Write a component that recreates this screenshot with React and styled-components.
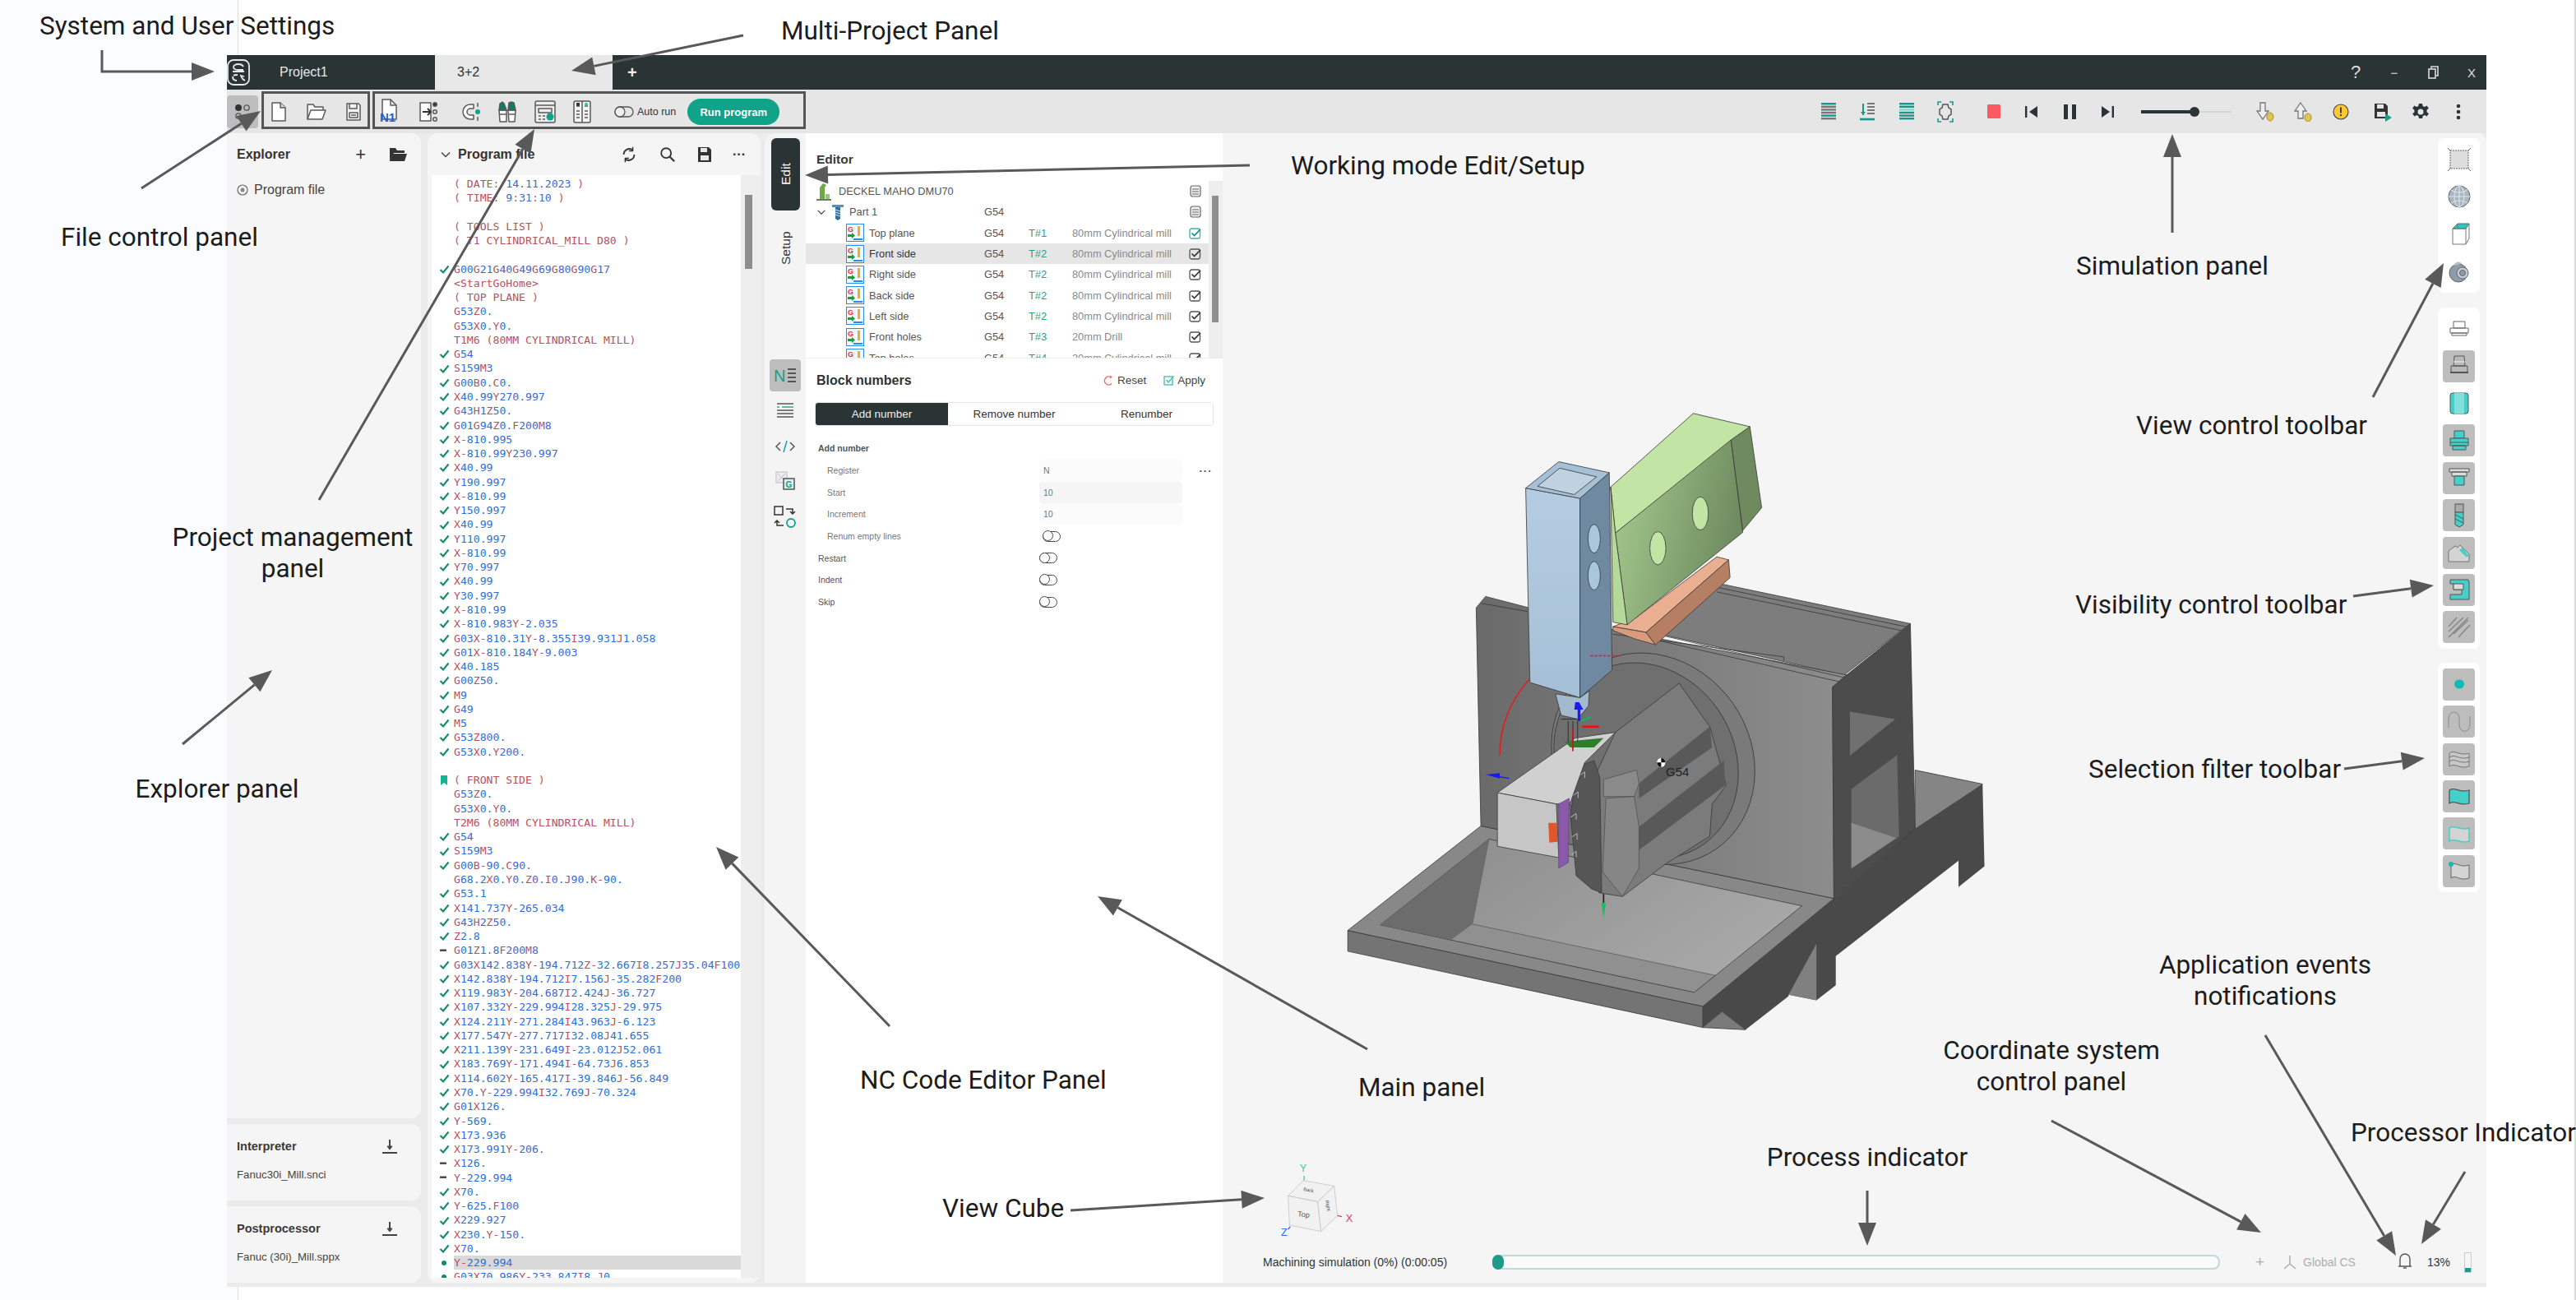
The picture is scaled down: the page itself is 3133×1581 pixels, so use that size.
import React from "react";
import styled, { createGlobalStyle } from "styled-components";

const GlobalStyle = createGlobalStyle`
    html, body {
        margin: 0;
        padding: 0;
    }
    body {
        width: 3133px;
        height: 1581px;
        overflow: hidden;
        font-family: "Liberation Sans", Arial, sans-serif;
        background: linear-gradient(to right, #fafcff 0 289px, #dcdcdc 289px 290px, #fff 290px 3131px, #dcdcdc 3131px);
    }
`;

const DARK = "#2b3435";
const TEAL = "#0fa38a";
const ICON = "#5a5a5a";

const Page = styled.div`
    position: relative;
    width: 3133px;
    height: 1581px;
    box-sizing: border-box;
    padding: 67px 109px 16px 276px;
    overflow: hidden;
`;

const Window = styled.div`
    height: 100%;
    display: flex;
    flex-direction: column;
    background: #ebebeb;
`;

/* title bar */
const TitleBar = styled.div`
    height: 42px;
    flex-shrink: 0;
    display: flex;
    align-items: center;
    background: ${DARK};
    color: #fff;
`;
const LogoBox = styled.div`
    width: 64px;
    height: 100%;
    display: flex;
    align-items: center;
`;
const Tab = styled.div`
    height: 100%;
    display: flex;
    align-items: center;
    width: ${props => props.$w}px;
    padding-left: ${props => props.$pad}px;
    box-sizing: border-box;
    font-size: 16px;
    background: ${props => (props.$active ? "#e8e8e8" : "transparent")};
    color: ${props => (props.$active ? "#333" : "#e6e6e6")};
`;
const AddTab = styled.div`
    margin-left: 18px;
    font-size: 20px;
    font-weight: 700;
    color: #eee;
`;
const WinButtons = styled.div`
    margin-left: auto;
    display: flex;
    align-items: center;
    height: 100%;
    margin-right: -5.5px;
`;
const WinButton = styled.div`
    width: 47px;
    display: flex;
    justify-content: center;
    align-items: center;
    font-size: ${props => props.$size || 16}px;
    color: #ddd;
`;

/* tool bar */
const ToolBar = styled.div`
    height: 53px;
    flex-shrink: 0;
    display: flex;
    background: #e6e6e6;
`;
const ToggleButton = styled.div`
    width: 38px;
    height: 40px;
    margin-top: 7px;
    margin-right: 4px;
    background: #bdbdbd;
    border-radius: 4px;
    display: flex;
    align-items: center;
    justify-content: center;
`;
const OutlineGroup = styled.div`
    height: 46px;
    margin-top: 2px;
    margin-right: 3px;
    width: ${props => props.$w}px;
    box-sizing: border-box;
    border: 3px solid #555;
    display: flex;
    align-items: center;
    padding-top: 4px;
`;
const ToolSlot = styled.div`
    width: ${props => props.$w || 46}px;
    flex-shrink: 0;
    display: flex;
    align-items: center;
    justify-content: center;
`;
const AutoRun = styled.div`
    display: flex;
    align-items: center;
    gap: 4px;
    margin-left: 18px;
    font-size: 12.5px;
    color: #333;
`;
const RunButton = styled.div`
    margin-left: 14px;
    width: 112px;
    height: 32px;
    border-radius: 16px;
    background: ${TEAL};
    color: #fff;
    font-size: 13px;
    font-weight: 700;
    display: flex;
    align-items: center;
    justify-content: center;
`;
const SimTools = styled.div`
    margin-left: auto;
    padding-right: 11px;
    display: flex;
    align-items: center;
    height: 100%;
`;
const SimGap = styled.div`
    width: ${props => props.$w}px;
`;
const Slider = styled.div`
    position: relative;
    width: 110px;
    height: 2px;
    margin-left: 18px;
    margin-right: 18px;
    background: #d6d6d6;
`;
const SliderFill = styled.div`
    height: 4px;
    margin-top: -1px;
    width: 65px;
    background: ${DARK};
`;
const SliderKnob = styled.div`
    position: absolute;
    left: 59px;
    top: -5px;
    width: 12px;
    height: 12px;
    border-radius: 50%;
    background: ${DARK};
`;

/* body */
const Body = styled.div`
    flex: 1;
    min-height: 0;
    display: flex;
    padding-bottom: 5px;
`;
const ExplorerColumn = styled.div`
    width: 236px;
    flex-shrink: 0;
    display: flex;
    flex-direction: column;
    gap: 7px;
    margin-right: 8px;
`;
const SidePanel = styled.div`
    background: #f5f5f5;
    border-radius: 0 12px 12px 0;
    box-sizing: border-box;
    flex: ${props => (props.$grow ? 1 : "0 0 93px")};
    padding: 0 12px;
`;
const PanelHead = styled.div`
    height: 51px;
    display: flex;
    align-items: center;
    justify-content: space-between;
    font-size: 16px;
    font-weight: 700;
    color: #333;
`;
const HeadIcons = styled.div`
    display: flex;
    align-items: center;
    gap: 28px;
    padding-right: 5px;
    font-size: 22px;
    font-weight: 400;
`;
const ExplorerItem = styled.div`
    margin-top: 9px;
    display: flex;
    align-items: center;
    gap: 7px;
    font-size: 16px;
    color: #444;
`;
const InfoHead = styled.div`
    height: 54px;
    display: flex;
    align-items: center;
    justify-content: space-between;
    font-size: 14.5px;
    font-weight: 700;
    color: #3a3a3a;
    padding-right: 16px;
`;
const InfoValue = styled.div`
    font-size: 13.2px;
    color: #444;
`;

const ProgramPanel = styled.div`
    width: 405px;
    flex-shrink: 0;
    display: flex;
    flex-direction: column;
    background: #f5f5f5;
    border-radius: 12px;
    padding: 0 0 6px 5px;
    box-sizing: border-box;
    margin-right: 5px;
`;
const ProgramHead = styled.div`
    height: 51px;
    flex-shrink: 0;
    display: flex;
    align-items: center;
    padding-left: 10px;
    font-size: 16px;
    font-weight: 700;
    color: #333;
`;
const ProgramTitle = styled.div`
    margin-left: 8px;
    flex: 1;
`;
const ProgramIcons = styled.div`
    display: flex;
    align-items: center;
    gap: 25px;
    padding-right: 18px;
`;
const CodeRow = styled.div`
    flex: 1;
    min-height: 0;
    display: flex;
`;
const CodeArea = styled.div`
    width: 376px;
    flex-shrink: 0;
    background: #fff;
    overflow: hidden;
    padding-top: 2px;
    box-sizing: border-box;
`;
const CodeLine = styled.div`
    height: 17.27px;
    line-height: 17.27px;
    display: flex;
    white-space: pre;
    font-family: "DejaVu Sans Mono", "Liberation Mono", monospace;
    font-size: 13.15px;
    color: #b5525f;
`;
const Gutter = styled.div`
    width: 27px;
    flex-shrink: 0;
    display: flex;
    align-items: center;
    justify-content: center;
    padding-left: 3px;
    box-sizing: border-box;
`;
const CodeText = styled.div`
    flex: 1;
    overflow: hidden;
    background: ${props => (props.$hl ? "#d9d9d9" : "transparent")};
`;
const Num = styled.span`
    color: #2f6ed8;
`;
const Track = styled.div`
    flex: 1;
    background: #eeeeee;
    padding: ${props => props.$top}px 0 0 ${props => props.$left}px;
`;
const Thumb = styled.div`
    width: ${props => props.$w}px;
    height: ${props => props.$h}px;
    background: #8e8e8e;
`;

/* edit column */
const ModeColumn = styled.div`
    width: 50px;
    flex-shrink: 0;
    background: #f4f4f4;
    border-radius: 12px 0 0 0;
    display: flex;
    flex-direction: column;
    align-items: center;
    padding-top: 6px;
    box-sizing: border-box;
`;
const ModeTab = styled.div`
    width: 35px;
    height: ${props => props.$h}px;
    flex-shrink: 0;
    border-radius: 6px;
    background: ${props => (props.$active ? DARK : "transparent")};
    color: ${props => (props.$active ? "#fff" : "#333")};
    writing-mode: vertical-rl;
    transform: rotate(180deg);
    display: flex;
    align-items: center;
    justify-content: center;
    font-size: 15.5px;
`;
const ModeIcons = styled.div`
    margin-top: ${props => props.$top}px;
    display: flex;
    flex-direction: column;
    align-items: center;
`;
const ModeIcon = styled.div`
    width: 38px;
    height: ${props => props.$h}px;
    border-radius: 4px;
    background: ${props => (props.$on ? "#bdbdbd" : "transparent")};
    display: flex;
    align-items: center;
    justify-content: center;
`;

const EditorColumn = styled.div`
    width: 507px;
    flex-shrink: 0;
    display: flex;
    flex-direction: column;
    background: #fff;
`;
const EditorHead = styled.div`
    height: 52px;
    flex-shrink: 0;
    margin-top: 6px;
    padding-left: 13px;
    display: flex;
    align-items: center;
    font-size: 15.5px;
    font-weight: 700;
    color: #3a3a3a;
`;
const TreeWrap = styled.div`
    height: 216px;
    flex-shrink: 0;
    display: flex;
    overflow: hidden;
    border-bottom: 1px solid #ececec;
    box-sizing: border-box;
`;
const TreeList = styled.div`
    width: 490px;
    flex-shrink: 0;
`;
const TreeRow = styled.div`
    height: 25.3px;
    display: grid;
    grid-template-columns: 217px 54px 53px 133px 1fr;
    align-items: center;
    font-size: 12.8px;
    color: #555;
    background: ${props => (props.$hl ? "#e6e6e6" : "transparent")};
    white-space: nowrap;
`;
const NameCell = styled.div`
    display: flex;
    align-items: center;
    padding-left: ${props => props.$pad}px;
    gap: ${props => props.$gap}px;
    color: ${props => (props.$hl ? "#333" : "#555")};
`;
const ToolCell = styled.div`
    color: #2a9d8f;
`;
const DescCell = styled.div`
    color: #8a8a8a;
`;
const CheckCell = styled.div`
    display: flex;
    justify-content: center;
`;

const BlockPanel = styled.div`
    flex: 1;
    padding: 0 11px 0 11px;
`;
const BlockHead = styled.div`
    height: 53px;
    display: flex;
    align-items: center;
    padding-left: 2px;
    padding-right: 10px;
    font-size: 16px;
    font-weight: 700;
    color: #333;
`;
const BlockAction = styled.div`
    display: flex;
    align-items: center;
    gap: 4px;
    font-size: 13.5px;
    font-weight: 400;
    color: #444;
    margin-left: ${props => props.$ml};
`;
const Segments = styled.div`
    display: grid;
    grid-template-columns: repeat(3, 1fr);
    height: 29px;
    border: 1px solid #e6e6e6;
    border-radius: 4px;
    overflow: hidden;
    box-sizing: border-box;
    width: 485px;
`;
const Segment = styled.div`
    display: flex;
    align-items: center;
    justify-content: center;
    font-size: 13.5px;
    background: ${props => (props.$on ? DARK : "#fff")};
    color: ${props => (props.$on ? "#eee" : "#333")};
`;
const Form = styled.div`
    margin-top: 14px;
`;
const FormRow = styled.div`
    height: 26.7px;
    display: grid;
    grid-template-columns: 269px 174px 1fr;
    align-items: center;
    font-size: 10.5px;
    color: ${props => (props.$nested ? "#777" : "#555")};
    font-weight: ${props => (props.$strong ? 700 : 400)};
    padding-left: ${props => (props.$nested ? 15 : 4)}px;
`;
const FormValue = styled.div`
    height: 26px;
    line-height: 26px;
    padding-left: 5px;
    border-radius: 4px;
    background: ${props => (props.$hover ? "#f5f5f5" : "#fbfbfb")};
    margin-left: -11px;
    margin-right: 11px;
`;
const FormMore = styled.div`
    font-size: 13px;
    font-weight: 700;
    color: #555;
    text-align: center;
    letter-spacing: 1px;
    margin-left: 8px;
`;
const Toggle = styled.div`
    width: 20px;
    height: 11px;
    border: 1.5px solid #4a4a4a;
    border-radius: 7px;
    position: relative;
    margin-left: ${props => (props.$nested ? "-7px" : "0")};
    &::before {
        content: "";
        position: absolute;
        left: -1px;
        top: -1.5px;
        width: 11px;
        height: 11px;
        border: 1.5px solid #4a4a4a;
        border-radius: 50%;
        background: #fff;
    }
`;

/* main panel */
const Viewport = styled.div`
    flex: 1;
    min-width: 0;
    position: relative;
    display: flex;
    flex-direction: column;
    background: #f5f5f5;
    border-radius: 0 10px 0 0;
`;
const ViewRow = styled.div`
    flex: 1;
    min-height: 0;
    display: flex;
    justify-content: flex-end;
    padding: 6px 8px 0 0;
`;
const Rail = styled.div`
    width: 51px;
    display: flex;
    flex-direction: column;
    gap: 17.5px;
`;
const RailGroup = styled.div`
    background: #fff;
    border-radius: 8px;
    padding: 6.5px 6px;
    display: flex;
    flex-direction: column;
    gap: 6.4px;
`;
const RailButton = styled.div`
    height: 39px;
    width: 39px;
    border-radius: 4px;
    background: ${props => (props.$on ? "#bdbdbd" : "transparent")};
    display: flex;
    align-items: center;
    justify-content: center;
`;
const MachineDrawing = styled.svg`
    position: absolute;
    left: 73px;
    top: 288px;
`;
const CubeDrawing = styled.svg`
    position: absolute;
    left: 43px;
    top: 1238px;
`;
const StatusBar = styled.div`
    height: 38px;
    flex-shrink: 0;
    display: flex;
    align-items: flex-start;
    padding-left: 49px;
    font-size: 14px;
    color: #333;
`;
const StatusText = styled.div`
    width: 279px;
    flex-shrink: 0;
    line-height: 26px;
`;
const Progress = styled.div`
    width: 885px;
    height: 18px;
    margin-top: 4px;
    flex-shrink: 0;
    box-sizing: border-box;
    border: 2px solid #bcdcd8;
    border-radius: 8px;
    background: #fafafa;
    display: flex;
    align-items: center;
`;
const ProgressKnob = styled.div`
    width: 14px;
    height: 18px;
    margin-left: -2px;
    border-radius: 8px;
    background: #1f9a8a;
`;
const CoordSystem = styled.div`
    display: flex;
    align-items: center;
    gap: 3px;
    height: 26px;
    margin-left: 43px;
    width: 173px;
    flex-shrink: 0;
    color: #aeaeae;
    font-size: 14px;
`;
const CoordPlus = styled.span`
    font-size: 19px;
    margin-right: 15px;
`;
const Percent = styled.div`
    height: 26px;
    line-height: 26px;
    margin-left: 18px;
    width: 45px;
    font-size: 14px;
`;
const Battery = styled.div`
    width: 9px;
    height: 25px;
    margin-top: 1px;
    box-sizing: border-box;
    border: 1px solid #b7d5d1;
    display: flex;
    align-items: flex-end;
`;
const BatteryFill = styled.div`
    width: 100%;
    height: 5px;
    background: #1f9a8a;
`;

/* annotations on top of the screenshot */
const ArrowLayer = styled.svg`
    position: absolute;
    left: 0;
    top: 0;
    pointer-events: none;
`;
const Callout = styled.div`
    position: absolute;
    left: ${props => props.$x}px;
    top: ${props => props.$y}px;
    transform: ${props => (props.$center ? "translate(-50%, -50%)" : "translateY(-50%)")};
    font-family: Roboto, "Liberation Sans", sans-serif;
    font-size: 31.5px;
    line-height: 38px;
    color: #1c1c1c;
    text-align: center;
    white-space: nowrap;
`;

const SVG = ({ s = 24, w, h, vb = "0 0 24 24", children }) => (
    <svg width={w || s} height={h || s} viewBox={vb} fill="none" stroke={ICON} strokeWidth="1.5" strokeLinejoin="round">
        {children}
    </svg>
);

const Logo = () => (
    <svg width="28" height="32" viewBox="0 0 28 32" fill="none" stroke="#e8e8e8" strokeWidth="1.8">
        <rect x="1" y="1" width="26" height="30" rx="7" />
        <path d="M20 9c-1-2-3-3-6-3S8 7 8 9.5 10 13 14 13h6" />
        <path d="M7 15h14M8 20c1-1 3-1 5-1M7 21c0 3 2 5 5 5M22 26c-2-1-4-3-5-6l4 1" />
    </svg>
);

const ModeDots = () => (
    <svg width="22" height="20" viewBox="0 0 22 20">
        <circle cx="6" cy="5" r="4" fill="#333" />
        <circle cx="16" cy="5" r="3.2" fill="none" stroke="#555" strokeWidth="1.3" />
        <circle cx="6" cy="15" r="3.2" fill="none" stroke="#555" strokeWidth="1.3" />
    </svg>
);

const NewFileIcon = () => (
    <SVG w={20} h={26} vb="0 0 20 26">
        <path d="M2 2h10l6 6v16H2z" fill="#fff" />
        <path d="M12 2v6h6" fill="#ddd" />
    </SVG>
);
const OpenIcon = () => (
    <SVG w={26} h={24} vb="0 0 26 24">
        <path d="M2 21V3h7l2 3h10v4" fill="#f4f4f4" />
        <path d="M2 21l4-11h18l-4 11z" fill="#fff" />
    </SVG>
);
const SaveIcon = () => (
    <SVG w={20} h={24} vb="0 0 20 24">
        <path d="M2 2h14l2 2v18H2z" fill="#f4f4f4" />
        <path d="M5 2v6h9V2M5 13h10v6H5z" />
        <path d="M7 16h6" />
    </SVG>
);
const N1Icon = () => (
    <svg width="26" height="34" viewBox="0 0 26 34">
        <path d="M4 2h10l7 7v17H4z" fill="#fff" stroke={ICON} strokeWidth="1.5" />
        <path d="M14 2v7h7" fill="none" stroke={ICON} strokeWidth="1.5" />
        <text x="1" y="29" fontFamily="Liberation Sans" fontSize="15" fontWeight="700" fill="#1d5fd6">N1</text>
    </svg>
);
const ImportIcon = () => (
    <SVG w={24} h={26} vb="0 0 24 26">
        <path d="M2 2h13v22H2z" fill="#fff" />
        <path d="M5 13h10M11 9l4 4-4 4" stroke="#333" strokeWidth="2" />
        <circle cx="20" cy="4" r="2.3" fill="#333" />
        <circle cx="20" cy="13" r="2.3" />
        <circle cx="20" cy="22" r="2.3" />
    </SVG>
);
const MagnetIcon = () => (
    <SVG w={26} h={28} vb="0 0 26 28">
        <path d="M16 5h-4a9 9 0 0 0 0 18h4v-5h-4a4 4 0 0 1 0-8h4z" fill="#fff" />
        <circle cx="21" cy="14" r="3" fill={TEAL} stroke="none" />
        <path d="M21 3v5M21 20v5" />
    </SVG>
);
const ToolsIcon = () => (
    <SVG w={24} h={28} vb="0 0 24 28">
        <path d="M2 12h9v14H3zM13 12h9l-1 14h-7z" fill="#fff" />
        <path d="M2 12l1-8 3-2 2 2 3 8zM13 12l1-9 3-1 3 1 2 9z" fill="#0e7a68" />
        <path d="M2 17h9M13 17h9" />
    </SVG>
);
const PanelIcon = () => (
    <SVG w={28} h={30} vb="0 0 28 30">
        <rect x="2" y="2" width="24" height="26" rx="2" fill="#ededed" />
        <path d="M2 7h24M6 11h16v5H6zM6 20h3M11 20h3M6 24h3M11 24h3" />
        <circle cx="20" cy="21" r="4.5" fill={TEAL} stroke="none" />
    </SVG>
);
const ColumnsIcon = () => (
    <SVG w={24} h={30} vb="0 0 24 30">
        <rect x="2" y="2" width="20" height="26" rx="2" fill="#f2f2f2" />
        <path d="M12 2v26M5 8h4M15 8h4M5 14h4M15 14h4M5 18h4M15 18h4M5 22h4M15 22h4" />
        <circle cx="17" cy="6" r="2" fill="#18c9a8" stroke="none" />
        <rect x="5" y="4" width="4" height="4" fill="#333" stroke="none" />
    </SVG>
);
const SwitchIcon = () => (
    <svg width="24" height="14" viewBox="0 0 24 14" fill="none" stroke="#555" strokeWidth="1.3">
        <rect x="1" y="1" width="22" height="12" rx="6" />
        <circle cx="7" cy="7" r="6" fill="#eee" />
    </svg>
);

const SyncIcon = () => (
    <SVG s={22}>
        <path d="M5 12a7.5 7.5 0 0 1 12-6M19 12a7.5 7.5 0 0 1-12 6" stroke="#333" strokeWidth="2" />
        <path d="M17 2v5h-5M7 22v-5h5" stroke="#333" strokeWidth="1.6" />
    </SVG>
);
const SearchIcon = () => (
    <SVG s={22}>
        <circle cx="10" cy="10" r="6.5" stroke="#333" strokeWidth="2" />
        <path d="M15 15l6 6" stroke="#333" strokeWidth="2.4" />
    </SVG>
);
const DiskIcon = () => (
    <svg width="18" height="20" viewBox="0 0 18 20">
        <path d="M1 1h13l3 3v15H1z" fill="#333" />
        <rect x="4" y="2" width="8" height="5" fill="#e8e8e8" />
        <rect x="4" y="11" width="10" height="6" fill="#e8e8e8" />
    </svg>
);
const FolderDark = () => (
    <svg width="22" height="20" viewBox="0 0 22 20">
        <path d="M1 18V2h7l2 3h9v3H6z" fill="#333" />
        <path d="M1 18l4-9h17l-3 9z" fill="#333" />
    </svg>
);
const Chevron = ({ s = 14 }) => (
    <svg width={s} height={s} viewBox="0 0 14 14" fill="none" stroke="#444" strokeWidth="1.5">
        <path d="M2 4.5l5 5 5-5" />
    </svg>
);
const TargetIcon = () => (
    <svg width="14" height="14" viewBox="0 0 14 14" fill="none" stroke="#666" strokeWidth="1.2">
        <circle cx="7" cy="7" r="6" />
        <circle cx="7" cy="7" r="2.5" fill="#888" stroke="none" />
    </svg>
);
const DownloadIcon = () => (
    <svg width="20" height="20" viewBox="0 0 20 20" fill="none" stroke="#444" strokeWidth="2">
        <path d="M10 2v9" />
        <path d="M7 10l3 4 3-4z" fill="#444" strokeWidth="1" />
        <path d="M1 18h18" />
    </svg>
);

/* gutter marks */
const CheckMark = () => (
    <svg width="13" height="11" viewBox="0 0 13 11" fill="none" stroke="#128a6e" strokeWidth="2.1">
        <path d="M1.5 6l3.5 3.5L11.5 1.5" />
    </svg>
);
const DashMark = () => (
    <svg width="10" height="4" viewBox="0 0 10 4">
        <rect width="8" height="2.4" fill="#444" y="0.5" />
    </svg>
);
const DotMark = () => (
    <svg width="8" height="8" viewBox="0 0 8 8">
        <circle cx="4" cy="4" r="3" fill="#128a6e" />
    </svg>
);
const BookMark = () => (
    <svg width="10" height="12" viewBox="0 0 10 12">
        <path d="M1 0h8v12L5 9l-4 3z" fill="#13b394" />
    </svg>
);
const MARKS = { v: <CheckMark />, "-": <DashMark />, o: <DotMark />, b: <BookMark /> };

/* sim tool bar */
const Lines = ({ colors }) => (
    <svg width="18" height="24" viewBox="0 0 18 24">
        {colors.map((c, i) => (
            <rect key={i} x="0" y={1 + i * 3.6} width="18" height="2.4" fill={c} />
        ))}
    </svg>
);
const SortIcon = () => (
    <svg width="18" height="24" viewBox="0 0 18 24" fill="none" stroke="#777" strokeWidth="2">
        <path d="M9 2h9M9 6h9M9 10h9M9 14h9" />
        <path d="M4 2v14" stroke="#18978a" />
        <path d="M1 12l3 4 3-4z" fill="#18978a" stroke="none" />
        <path d="M0 21h18" stroke="#18978a" strokeWidth="2.6" />
    </svg>
);
const GearFrame = () => (
    <svg width="20" height="26" viewBox="0 0 20 26" fill="none">
        <path d="M1 5V1h4M15 1h4v4M1 21v4h4M15 25h4v-4" stroke="#18978a" strokeWidth="1.6" />
        <path d="M7 4h6l1 4 3 2v6l-3 2-1 4H7l-1-4-3-2v-6l3-2z" stroke="#555" strokeWidth="1.5" />
    </svg>
);
const PrevIcon = () => (
    <svg width="16" height="14" viewBox="0 0 16 14">
        <rect x="0" y="0" width="2.4" height="14" fill="#2b3435" />
        <path d="M15 0v14L5 7z" fill="#2b3435" />
    </svg>
);
const NextIcon = () => (
    <svg width="16" height="14" viewBox="0 0 16 14">
        <rect x="13.6" y="0" width="2.4" height="14" fill="#2b3435" />
        <path d="M1 0v14l10-7z" fill="#2b3435" />
    </svg>
);
const PauseIcon = () => (
    <svg width="15" height="18" viewBox="0 0 15 18">
        <rect width="5" height="18" fill="#2b3435" />
        <rect x="10" width="5" height="18" fill="#2b3435" />
    </svg>
);
const StopIcon = () => (
    <svg width="16" height="17" viewBox="0 0 16 17">
        <rect width="16" height="17" rx="1.5" fill="#fa5a5f" />
    </svg>
);
const ArrowWarn = ({ up }) => (
    <svg width="24" height="24" viewBox="0 0 24 24" fill="none">
        <path d={up ? "M9 1l7 10h-4v9H6v-9H2z" : "M6 1h6v10h4l-7 10-7-10h4z"} fill="#eee" stroke="#777" strokeWidth="1.3" />
        <ellipse cx="18" cy={up ? 19 : 18} rx="4" ry="5" fill="#e4c44e" stroke="#a58d34" />
    </svg>
);
const WarnIcon = () => (
    <svg width="20" height="20" viewBox="0 0 20 20">
        <circle cx="10" cy="10" r="9" fill="#fcc934" stroke="#444" strokeWidth="1.2" />
        <rect x="9" y="4.5" width="2" height="7" fill="#444" />
        <rect x="9" y="13" width="2" height="2.2" fill="#444" />
    </svg>
);
const SavePlay = () => (
    <svg width="22" height="24" viewBox="0 0 22 24">
        <path d="M1 2h13l3 3v15H1z" fill="#333" />
        <rect x="4" y="3" width="8" height="5" fill="#e6e6e6" />
        <rect x="4" y="12" width="10" height="6" fill="#e6e6e6" />
        <path d="M14 14l8 5-8 5z" fill={TEAL} />
    </svg>
);
const GearIcon = () => (
    <svg width="20" height="20" viewBox="0 0 20 20">
        <path d="M8 0h4l.6 3 2.3 1 2.6-1.6 2.3 3.4-2.3 2 .1 2.4 2.3 2-2.3 3.4-2.6-1.6-2.3 1-.6 3H8l-.6-3-2.3-1-2.6 1.6L.2 12.2l2.3-2-.1-2.4-2.3-2L2.4 2.4 5 4l2.3-1z" fill="#2b3435" />
        <circle cx="10" cy="10" r="3.5" fill="#e6e6e6" />
    </svg>
);
const KebabIcon = () => (
    <svg width="6" height="20" viewBox="0 0 6 20">
        <circle cx="3" cy="3" r="2.3" fill="#333" />
        <circle cx="3" cy="10" r="2.3" fill="#333" />
        <circle cx="3" cy="17" r="2.3" fill="#333" />
    </svg>
);

/* editor tree icons */
const MachineIcon = () => (
    <svg width="18" height="22" viewBox="0 0 18 22">
        <path d="M4 20V6l4-5 4 2-2 3v14z" fill="#6fa84a" />
        <path d="M0 20h18v2H0z" fill="#6e7a64" />
        <path d="M11 14h5v6h-5z" fill="#9fbf88" />
    </svg>
);
const BoltIcon = () => (
    <svg width="14" height="20" viewBox="0 0 14 20">
        <path d="M0 1h14v3H0z" fill="#5a8fb8" />
        <path d="M4 4h6v14l-3 2-3-2z" fill="#2f6f9f" />
        <path d="M4 7l6 2M4 10l6 2M4 13l6 2" stroke="#bcd6e8" strokeWidth="1.2" />
    </svg>
);
const OpIcon = () => (
    <svg width="22" height="22" viewBox="0 0 22 22">
        <rect x="0.5" y="0.5" width="21" height="21" fill="#eef6ff" stroke="#2d8ae6" />
        <text x="2" y="10" fontFamily="Liberation Sans" fontSize="9" fontWeight="700" fill="#e33">G</text>
        <path d="M2 13h5v-2l4 3.5L7 18v-2H2z" fill="#1e9a3a" />
        <rect x="14" y="3" width="3" height="12" fill="#e0b030" />
        <path d="M9 19h11" stroke="#2d8ae6" strokeWidth="2" />
    </svg>
);
const ListDoc = () => (
    <svg width="14" height="15" viewBox="0 0 14 15" fill="none" stroke="#666" strokeWidth="1.2">
        <rect x="1" y="1" width="12" height="13" rx="2.5" fill="#f0f0f0" />
        <path d="M3 5h8M3 8h8M3 11h8" />
    </svg>
);
const CheckBox = ({ on }) => (
    <svg width="15" height="15" viewBox="0 0 15 15" fill="none">
        <rect x="1" y="2" width="12.5" height="12" rx="2.5" stroke={on ? "#3bb3a3" : "#555"} strokeWidth="1.3" />
        <path d="M3.5 7.5l3 3L14 3" stroke={on ? "#178a8a" : "#333"} strokeWidth="1.7" />
    </svg>
);
const ResetIcon = () => (
    <svg width="13" height="13" viewBox="0 0 13 13" fill="none" stroke="#f26b6b" strokeWidth="1.4">
        <path d="M10 10.5A5 5 0 1 1 8 2.2" />
        <path d="M8 .5l3 2-3 2z" fill="#f26b6b" stroke="none" />
    </svg>
);
const ApplyIcon = () => (
    <svg width="13" height="13" viewBox="0 0 13 13" fill="none" stroke="#3bbfa9" strokeWidth="1.3">
        <rect x="1" y="2" width="10" height="10" />
        <path d="M3.5 6l2.5 3L12.5 1.5" />
    </svg>
);

/* side mode icons */
const NLines = () => (
    <svg width="28" height="22" viewBox="0 0 28 22">
        <text x="0" y="18" fontFamily="Liberation Sans" fontSize="20" fill="#13a08c">N</text>
        <path d="M17 3h10M17 8h10M17 13h10M17 18h10" stroke="#555" strokeWidth="1.8" />
    </svg>
);
const IndentLines = () => (
    <svg width="20" height="20" viewBox="0 0 20 20">
        <path d="M0 2h20M0 10h20M0 14h20M0 18h20" stroke="#555" strokeWidth="1.4" />
        <path d="M0 6h3M6 6h14" stroke="#2aa79a" strokeWidth="1.4" />
    </svg>
);
const CodeIcon = () => (
    <svg width="24" height="16" viewBox="0 0 24 16" fill="none" strokeWidth="1.5">
        <path d="M6 3L1 8l5 5M18 3l5 5-5 5" stroke="#555" />
        <path d="M14 1l-4 14" stroke="#1b9fb3" />
    </svg>
);
const SwapPanes = () => (
    <svg width="24" height="24" viewBox="0 0 24 24">
        <rect x="1" y="1" width="13" height="13" fill="#eee" stroke="#bbb" />
        <path d="M3 3l9 9M12 3l-9 9" stroke="#bbb" />
        <rect x="10" y="9" width="13" height="13" fill="#d9f0ee" stroke="#555" strokeWidth="1.5" />
        <text x="12.5" y="20" fontFamily="Liberation Sans" fontSize="10" fontWeight="700" fill="#159a8c">G</text>
    </svg>
);
const ConvertIcon = () => (
    <svg width="28" height="28" viewBox="0 0 28 28" fill="none" stroke="#333" strokeWidth="1.5">
        <rect x="1" y="1" width="10" height="10" />
        <circle cx="21" cy="21" r="5" stroke="#13a08c" strokeWidth="1.8" />
        <path d="M15 4h8v5M20 7l3 3 3-3M12 24H4v-5M1 21l3-3 3 3" />
    </svg>
);

/* right rail icons, each drawn in a 30px box */
const Rail30 = ({ children }) => (
    <svg width="30" height="30" viewBox="0 0 30 30" fill="none" stroke="#666" strokeWidth="1">
        {children}
    </svg>
);
const C = "#45cfc9";
const RAIL = [
    [
        [false, <><rect x="4" y="4" width="22" height="22" fill="#ddd" strokeDasharray="2 1" /><path d="M1 1l3 3M29 1l-3 3M1 29l3-3M29 29l-3-3" /></>],
        [false, <><circle cx="15" cy="15" r="13" fill="#a9b7c4" /><path d="M2 15h26M15 2v26M5 7c6 4 14 4 20 0M5 23c6-4 14-4 20 0" stroke="#e2e8ee" /><ellipse cx="15" cy="15" rx="6" ry="13" stroke="#e2e8ee" /></>],
        [false, <><path d="M7 8h16v19H7z" fill="#fff" stroke="#777" /><path d="M7 8l6-6h14l-4 6z" fill="#2cc4c4" /><path d="M13 2v6M27 2v18l-4 7" stroke="#777" /></>],
        [false, <><circle cx="14" cy="17" r="11" fill="#8e9ba8" /><circle cx="19" cy="17" r="7" fill="#c5ccd3" /><circle cx="19" cy="17" r="3.5" fill="#8e9ba8" /><path d="M8 8c2-5 8-6 10-2" fill="#b5bdc6" stroke="none" /></>],
    ],
    [
        [false, <><path d="M8 6h14v8H8zM4 14h22v6H4zM6 20h18v3H6z" fill="#fff" /></>],
        [true, <><path d="M9 3h12l1 12H8zM5 15h20v8H5z" fill="#b9b9b9" stroke="#555" /><path d="M8 10h14" stroke="#eee" /><path d="M4 23h22" stroke="#555" strokeWidth="2" /></>],
        [false, <><rect x="4" y="3" width="22" height="25" rx="3" fill={C} stroke="#555" /><rect x="9" y="3" width="12" height="25" fill="#7fe0dc" stroke="none" /></>],
        [true, <><path d="M9 3h12v9H9z" fill={C} stroke="#555" /><path d="M4 12h22v9H4zM7 21h16v5H7z" fill={C} stroke="#555" /><path d="M4 17h22" stroke="#555" /></>],
        [true, <><path d="M3 4h24v4H3zM6 8h18v5H6z" fill="#ddd" stroke="#555" /><path d="M9 13h12v11H9z" fill={C} stroke="#555" /></>],
        [true, <><rect x="10" y="1" width="10" height="10" fill="#aaa" stroke="#555" /><path d="M10 11h10v15l-5 3-5-3z" fill={C} stroke="#555" /><path d="M10 14l10 5M10 19l10 5" stroke="#555" /></>],
        [true, <><path d="M2 26V13l8-6 3 2 3-3 11 11v9z" fill="#d4d4d4" stroke="#777" /><path d="M15 12l8 8h4l-8-11z" fill={C} stroke="none" /></>],
        [true, <><path d="M4 3h22l1 4v20H4v-6h14v-6H8V8H4z" fill={C} stroke="#555" /><path d="M8 8h12v7H8z" fill="#ddd" stroke="#555" /></>],
        [true, <><path d="M2 14L12 3M2 20L20 3M8 23L26 6M14 27L28 12M2 27L26 3" stroke="#8a8a8a" strokeWidth="1.6" /></>],
    ],
    [
        [true, <ellipse cx="15" cy="15" rx="6" ry="5.5" fill="#16b8b2" stroke="none" />],
        [true, <path d="M2 22V12c0-12 13-12 13 0v6c0 11 13 11 13 0V8" stroke="#8a8a8a" />],
        [true, <><path d="M3 8c7-5 12 4 24 0v16c-12 4-17-5-24 0z" fill="#c7c7c7" stroke="#777" /><path d="M3 13c7-5 12 4 24 0M3 18c7-5 12 4 24 0" stroke="#777" /></>],
        [true, <path d="M3 8c7-5 12 4 24 0v16c-12 4-17-5-24 0z" fill={C} stroke="#555" strokeWidth="1.3" />],
        [true, <path d="M3 8c7-5 12 4 24 0v16c-12 4-17-5-24 0z" fill="#d4d4d4" stroke={C} strokeWidth="1.5" />],
        [true, <><path d="M5 8c6-5 10 4 22 0v16c-12 4-16-5-22 0z" fill="#d4d4d4" stroke="#666" /><circle cx="5" cy="7" r="3" fill="#16b8b2" stroke="none" /></>],
    ],
];

/* the milling machine, in coordinates scaled to its own picture */
const Machine = () => (
    <MachineDrawing width="900" height="810" viewBox="1560 450 900 810">
        <defs>
            <linearGradient id="plate" x1="0" x2="1" y1="0" y2="0">
                <stop offset="0" stopColor="#6a6a6a" />
                <stop offset="1" stopColor="#8e8e8e" />
            </linearGradient>
            <linearGradient id="floor" x1="0" x2="1" y1="0" y2="0.6">
                <stop offset="0" stopColor="#8f8f8f" />
                <stop offset="1" stopColor="#a8a8a8" />
            </linearGradient>
            <linearGradient id="blue" x1="0" x2="0" y1="0" y2="1">
                <stop offset="0" stopColor="#b4cde2" />
                <stop offset="1" stopColor="#a5bfd6" />
            </linearGradient>
            <linearGradient id="green" x1="0" x2="1" y1="0" y2="0.3">
                <stop offset="0" stopColor="#a8cc90" />
                <stop offset="1" stopColor="#6f8c60" />
            </linearGradient>
        </defs>
        <g transform="translate(1560 450) scale(0.574 0.459)" stroke="#3a3a3a" strokeWidth="1.6" strokeLinejoin="round">
            {/* base */}
            <polygon points="1340,1060 1483,1097 1170,1405 1340,1215" fill="#858585" />
            <polygon points="890,1686 1168,1400 1340,1215 1483,1097 1487,1315 1432,1370 1432,1300 1172,1553 1172,1630 1131,1670 1072,1655 1072,1659 981,1748 931,1700 890,1742" fill="#494949" stroke="none" />
            <polygon points="1131,1670 1131,1520 1072,1655" fill="#808080" stroke="none" />
            <polygon points="890,1742 931,1700 981,1748" fill="#7a7a7a" />
            <polygon points="138,1485 890,1686 890,1742 138,1540" fill="#747474" />
            <polygon points="138,1485 420,1208 1168,1400 890,1686" fill="#888888" />
            <polygon points="207,1470 437,1243 1100,1420 872,1649" fill="#909090" />
            <polygon points="437,1243 1100,1420 917,1604 402,1468" fill="url(#floor)" strokeWidth="1" />
            <polygon points="207,1470 437,1243 402,1468 357,1510" fill="#6c6c6c" stroke="none" />
            {/* plates */}
            <polygon points="800,700 930,567 1330,672 1305,695 1190,808" fill="#7d7d7d" />
            <path d="M925,577L1320,680M920,588L1310,690" fill="none" />
            <polygon points="410,630 430,600 700,688 1195,808 1165,840 1168,1400 420,1208" fill="url(#plate)" />
            <path d="M420,618L520,640M700,700L1062,760L1062,770M800,702L1190,815M790,715L1180,826" fill="none" />
            <polygon points="1165,840 1195,808 1330,672 1340,1215 1168,1400" fill="#4c4c4c" />
            <polygon points="1202,905 1298,925 1202,1022" fill="#707070" stroke="none" />
            <polygon points="1205,1110 1302,1020 1306,1236 1205,1322" fill="#6b6b6b" stroke="none" />
            <polygon points="1205,1200 1300,1240 1205,1320" fill="#8c8c8c" stroke="none" />
            {/* table */}
            <ellipse cx="785" cy="1030" rx="212" ry="283" transform="rotate(-12 785 1030)" fill="#7a7a7a" />
            <ellipse cx="770" cy="1035" rx="192" ry="262" transform="rotate(-12 770 1035)" fill="#6f6f6f" />
            <polygon points="840,830 905,945 940,1100 910,1150 905,1235 810,1310 720,1395 670,1385 660,1080 705,960" fill="#7b7b7b" />
            <polygon points="755,1095 905,945 910,1000 755,1135" fill="#595959" stroke="none" />
            <polygon points="755,1210 935,1035 938,1100 755,1272" fill="#595959" stroke="none" />
            <polygon points="680,1085 750,1060 755,1095 745,1130 680,1130" fill="#8a8a8a" strokeWidth="1" />
            <polygon points="685,1135 745,1130 755,1210 755,1320 720,1395 678,1330" fill="#868686" strokeWidth="1" />
            <polygon points="625,1050 660,1035 672,1080 676,1385 655,1375 622,1340 610,1180" fill="#565656" />
            <path d="M628,1075l12,-10v16M612,1130l14,-12v16M610,1185l12,-10v16M612,1238l12,-10v16M612,1285l10,-10v16" stroke="#ccc" fill="none" />
            {/* stock */}
            <polygon points="455,1120 620,975 705,960 640,1040 610,1145 580,1150" fill="#d0d0d0" />
            <polygon points="455,1120 580,1150 585,1292 455,1262" fill="#c6c6c6" />
            <polygon points="585,1150 607,1135 605,1305 585,1320" fill="#8a5aa8" stroke="#6b4585" />
            <polygon points="563,1200 582,1200 582,1250 565,1252" fill="#e0552a" stroke="none" />
            <polygon points="597,985 680,975 660,1000 610,1000" fill="#2f7d2f" stroke="none" />
            {/* green part */}
            <polygon points="700,680 750,655 920,495 945,503 770,695" fill="#eaae90" />
            <polygon points="700,680 770,695 790,728 745,712 700,690" fill="#d99b7c" />
            <polygon points="770,695 945,503 948,550 790,728" fill="#b67e63" />
            <polygon points="695,310 870,115 990,150 705,432" fill="#c2e5a6" />
            <polygon points="705,432 950,185 975,430 730,675" fill="url(#green)" />
            <polygon points="695,310 705,432 730,675 700,668" fill="#b4da9a" />
            <polygon points="950,185 990,150 1015,365 975,425" fill="#708a5f" />
            <ellipse cx="885" cy="380" rx="17" ry="44" fill="#c2e5a6" />
            <ellipse cx="795" cy="472" rx="17" ry="44" fill="#c2e5a6" />
            {/* spindle */}
            <polygon points="578,858 630,868 650,850 648,890 625,925 590,915" fill="#a3bace" />
            <polygon points="515,313 630,340 630,868 524,828" fill="url(#blue)" />
            <polygon points="630,340 692,272 698,795 630,868" fill="#6f8aa0" />
            <polygon points="515,313 585,243 692,272 630,340" fill="#a5c0d7" />
            <polygon points="540,308 587,260 665,283 618,330" fill="#c0d2e0" />
            <ellipse cx="660" cy="447" rx="13" ry="38" fill="#a9c6dc" />
            <ellipse cx="660" cy="545" rx="13" ry="38" fill="#a9c6dc" />
            <path d="M590,925h34M605,930v55M615,930v55M625,930v55" stroke="#222" fill="none" />
            {/* gizmo */}
            <g strokeWidth="3" fill="none">
                <path d="M522,820C480,880 460,950 460,1020" stroke="#e02020" />
                <path d="M652,757h63" stroke="#e02020" strokeDasharray="6 3" />
                <path d="M628,930v-40" stroke="#1a1af0" strokeWidth="6" />
                <path d="M635,945h35" stroke="#e81010" strokeWidth="6" />
                <path d="M632,930l20,-10" stroke="#16b060" strokeWidth="6" />
                <path d="M615,950v60" stroke="#d81010" />
                <path d="M680,1388v25" stroke="#222" />
                <path d="M480,1082l-35,-7" stroke="#1a1af0" />
            </g>
            <polygon points="430,1072 460,1068 460,1082" fill="#1a1af0" stroke="none" />
            <polygon points="620,880 628,880 637,900 618,900" fill="#1a1af0" stroke="none" />
            <polygon points="675,1412 685,1412 680,1452" fill="#22b86a" stroke="none" />
            <ellipse cx="802" cy="1040" rx="9" ry="12" fill="#fff" stroke="none" />
            <path d="M802,1028A9,12 0 0 1 811,1040H802zM802,1052A9,12 0 0 1 793,1040H802z" fill="#111" stroke="none" />
        </g>
        <text x="2026" y="944" fontFamily="Liberation Sans" fontSize="15" fill="#222">G54</text>
    </MachineDrawing>
);

const ViewCube = () => (
    <CubeDrawing width="160" height="120" viewBox="0 0 480 360">
        <g stroke="#bbb" strokeWidth="2" fill="#f1f1f1" strokeLinejoin="round">
            <polygon points="110,163 165,107 278,127 218,185" />
            <polygon points="110,163 218,185 230,293 115,270" />
            <polygon points="218,185 278,127 290,235 230,293" />
        </g>
        <path d="M168,90v16" stroke="#3ecf8e" strokeWidth="4" />
        <path d="M290,235l16,4" stroke="#e0306a" strokeWidth="4" />
        <path d="M118,275l-8,10" stroke="#2a6ae8" strokeWidth="4" />
        <g fontFamily="Liberation Sans">
            <text x="152" y="76" fontSize="38" fill="#3ecf8e">Y</text>
            <text x="320" y="258" fontSize="38" fill="#e0306a">X</text>
            <text x="84" y="310" fontSize="38" fill="#2a6ae8">Z</text>
            <text x="144" y="238" fontSize="27" fill="#555" transform="rotate(6 144 238)">Top</text>
            <text x="165" y="144" fontSize="17" fill="#444" transform="rotate(10 165 144)">Back</text>
            <text x="246" y="180" fontSize="17" fill="#444" transform="rotate(80 246 180)">Right</text>
        </g>
    </CubeDrawing>
);

const CODE = [
    "  ( DATE: 14.11.2023 )",
    "  ( TIME: 9:31:10 )",
    "  ",
    "# ( TOOLS LIST )",
    "# ( T1 CYLINDRICAL_MILL D80 )",
    "  ",
    "v G00G21G40G49G69G80G90G17",
    "# <StartGoHome>",
    "# ( TOP PLANE )",
    "  G53Z0.",
    "  G53X0.Y0.",
    "# T1M6 (80MM CYLINDRICAL MILL)",
    "v G54",
    "v S159M3",
    "v G00B0.C0.",
    "v X40.99Y270.997",
    "v G43H1Z50.",
    "v G01G94Z0.F200M8",
    "v X-810.995",
    "v X-810.99Y230.997",
    "v X40.99",
    "v Y190.997",
    "v X-810.99",
    "v Y150.997",
    "v X40.99",
    "v Y110.997",
    "v X-810.99",
    "v Y70.997",
    "v X40.99",
    "v Y30.997",
    "v X-810.99",
    "v X-810.983Y-2.035",
    "v G03X-810.31Y-8.355I39.931J1.058",
    "v G01X-810.184Y-9.003",
    "v X40.185",
    "v G00Z50.",
    "v M9",
    "v G49",
    "v M5",
    "v G53Z800.",
    "v G53X0.Y200.",
    "  ",
    "B ( FRONT SIDE )",
    "  G53Z0.",
    "  G53X0.Y0.",
    "# T2M6 (80MM CYLINDRICAL MILL)",
    "v G54",
    "v S159M3",
    "v G00B-90.C90.",
    "  G68.2X0.Y0.Z0.I0.J90.K-90.",
    "v G53.1",
    "v X141.737Y-265.034",
    "v G43H2Z50.",
    "v Z2.8",
    "- G01Z1.8F200M8",
    "v G03X142.838Y-194.712Z-32.667I8.257J35.04F100",
    "v X142.838Y-194.712I7.156J-35.282F200",
    "v X119.983Y-204.687I2.424J-36.727",
    "v X107.332Y-229.994I28.325J-29.975",
    "v X124.211Y-271.284I43.963J-6.123",
    "v X177.547Y-277.717I32.08J41.655",
    "v X211.139Y-231.649I-23.012J52.061",
    "v X183.769Y-171.494I-64.73J6.853",
    "v X114.602Y-165.417I-39.846J-56.849",
    "v X70.Y-229.994I32.769J-70.324",
    "v G01X126.",
    "v Y-569.",
    "v X173.936",
    "v X173.991Y-206.",
    "- X126.",
    "- Y-229.994",
    "v X70.",
    "v Y-625.F100",
    "v X229.927",
    "v X230.Y-150.",
    "v X70.",
    "H Y-229.994",
    "o G03X70.986Y-233.847I8.J0.",
];

const CodeRowLine = ({ line }) => {
    const mark = line[0];
    const text = line.slice(2);
    const plain = mark === "#" || mark === "B";
    const parts = plain ? [text] : text.split(/(\d[\d.]*|\.)/);
    const gutter = mark === "H" ? MARKS.o : mark === "B" ? MARKS.b : MARKS[mark];
    return (
        <CodeLine>
            <Gutter>{gutter}</Gutter>
            <CodeText $hl={mark === "H"}>
                {parts.map((p, i) => (i % 2 ? <Num key={i}>{p}</Num> : <span key={i}>{p}</span>))}
            </CodeText>
        </CodeLine>
    );
};

const OPS = [
    ["Top plane", "T#1", "80mm Cylindrical mill"],
    ["Front side", "T#2", "80mm Cylindrical mill"],
    ["Right side", "T#2", "80mm Cylindrical mill"],
    ["Back side", "T#2", "80mm Cylindrical mill"],
    ["Left side", "T#2", "80mm Cylindrical mill"],
    ["Front holes", "T#3", "20mm Drill"],
    ["Top holes", "T#4", "20mm Cylindrical mill"],
];

const CALLOUTS = [
    { x: 48, y: 32, text: "System and User Settings" },
    { x: 950, y: 38, text: "Multi-Project Panel" },
    { x: 74, y: 289, text: "File control panel" },
    { x: 356, y: 673, center: true, text: "Project management\npanel" },
    { x: 264, y: 960, center: true, text: "Explorer panel" },
    { x: 1046, y: 1314, text: "NC Code Editor Panel" },
    { x: 1570, y: 202, text: "Working mode Edit/Setup" },
    { x: 2642, y: 324, center: true, text: "Simulation panel" },
    { x: 2598, y: 518, text: "View control toolbar" },
    { x: 2524, y: 736, text: "Visibility control toolbar" },
    { x: 2540, y: 936, text: "Selection filter toolbar" },
    { x: 2755, y: 1193, center: true, text: "Application events\nnotifications" },
    { x: 2495, y: 1297, center: true, text: "Coordinate system\ncontrol panel" },
    { x: 2859, y: 1378, text: "Processor Indicator" },
    { x: 2271, y: 1408, center: true, text: "Process indicator" },
    { x: 1729, y: 1323, center: true, text: "Main panel" },
    { x: 1146, y: 1470, text: "View Cube" },
];

// each arrow runs from its first point to the tip at its last point
const ARROWS = [
    [[124, 61], [124, 87], [261, 87]],
    [[904, 43], [695, 86]],
    [[172, 229], [317, 135]],
    [[388, 608], [650, 157]],
    [[222, 905], [331, 815]],
    [[1082, 1248], [871, 1030]],
    [[1520, 201], [979, 213]],
    [[2642, 283], [2642, 163]],
    [[2886, 483], [2972, 320]],
    [[2862, 725], [2960, 712]],
    [[2851, 935], [2949, 922]],
    [[2755, 1259], [2914, 1527]],
    [[2495, 1363], [2750, 1499]],
    [[2998, 1425], [2945, 1513]],
    [[2271, 1448], [2271, 1515]],
    [[1663, 1276], [1335, 1090]],
    [[1302, 1472], [1538, 1457]],
];

const Arrow = ({ points }) => {
    const tip = points[points.length - 1];
    const prev = points[points.length - 2];
    const a = Math.atan2(tip[1] - prev[1], tip[0] - prev[0]);
    const len = 28;
    const half = 11;
    const bx = tip[0] - len * Math.cos(a);
    const by = tip[1] - len * Math.sin(a);
    const nx = -Math.sin(a) * half;
    const ny = Math.cos(a) * half;
    const shaft = points.slice(0, -1).concat([[bx, by]]);
    return (
        <g>
            <polyline points={shaft.map(p => p.join(",")).join(" ")} fill="none" stroke="#595959" strokeWidth="3" />
            <polygon points={`${tip[0]},${tip[1]} ${bx + nx},${by + ny} ${bx - nx},${by - ny}`} fill="#595959" />
        </g>
    );
};

const App = () => (
    <Page>
        <GlobalStyle />
        <Window>
            <TitleBar>
                <LogoBox><Logo /></LogoBox>
                <Tab $w={189} $pad={0}>Project1</Tab>
                <Tab $w={216} $pad={27} $active>3+2</Tab>
                <AddTab>+</AddTab>
                <WinButtons>
                    <WinButton $size={22}>?</WinButton>
                    <WinButton $size={15}>−</WinButton>
                    <WinButton>
                        <svg width="14" height="16" viewBox="0 0 14 16" fill="none" stroke="#ddd" strokeWidth="1.6">
                            <path d="M5 3V1h8v11h-2" />
                            <rect x="2" y="4" width="8" height="11" />
                        </svg>
                    </WinButton>
                    <WinButton $size={15}>X</WinButton>
                </WinButtons>
            </TitleBar>
            <ToolBar>
                <ToggleButton><ModeDots /></ToggleButton>
                <OutlineGroup $w={132}>
                    <ToolSlot $w={36}><NewFileIcon /></ToolSlot>
                    <ToolSlot $w={56}><OpenIcon /></ToolSlot>
                    <ToolSlot $w={34}><SaveIcon /></ToolSlot>
                </OutlineGroup>
                <OutlineGroup $w={527}>
                    <ToolSlot $w={35}><N1Icon /></ToolSlot>
                    <ToolSlot $w={60}><ImportIcon /></ToolSlot>
                    <ToolSlot $w={44}><MagnetIcon /></ToolSlot>
                    <ToolSlot $w={44}><ToolsIcon /></ToolSlot>
                    <ToolSlot $w={48}><PanelIcon /></ToolSlot>
                    <ToolSlot $w={42}><ColumnsIcon /></ToolSlot>
                    <AutoRun><SwitchIcon />Auto run</AutoRun>
                    <RunButton>Run program</RunButton>
                </OutlineGroup>
                <SimTools>
                    <ToolSlot $w={47}><Lines colors={["#18978a", "#777", "#777", "#777", "#18978a", "#777"]} /></ToolSlot>
                    <ToolSlot $w={48}><SortIcon /></ToolSlot>
                    <ToolSlot $w={47}><Lines colors={["#18978a", "#18978a", "#9cc", "#18978a", "#18978a", "#18978a"]} /></ToolSlot>
                    <ToolSlot $w={47}><GearFrame /></ToolSlot>
                    <SimGap $w={13} />
                    <ToolSlot><StopIcon /></ToolSlot>
                    <ToolSlot><PrevIcon /></ToolSlot>
                    <ToolSlot><PauseIcon /></ToolSlot>
                    <ToolSlot><NextIcon /></ToolSlot>
                    <Slider>
                        <SliderFill />
                        <SliderKnob />
                    </Slider>
                    <ToolSlot><ArrowWarn /></ToolSlot>
                    <ToolSlot><ArrowWarn up /></ToolSlot>
                    <ToolSlot><WarnIcon /></ToolSlot>
                    <SimGap $w={5} />
                    <ToolSlot><SavePlay /></ToolSlot>
                    <ToolSlot><GearIcon /></ToolSlot>
                    <ToolSlot><KebabIcon /></ToolSlot>
                </SimTools>
            </ToolBar>
            <Body>
                <ExplorerColumn>
                    <SidePanel $grow>
                        <PanelHead>
                            Explorer
                            <HeadIcons>+<FolderDark /></HeadIcons>
                        </PanelHead>
                        <ExplorerItem><TargetIcon />Program file</ExplorerItem>
                    </SidePanel>
                    <SidePanel>
                        <InfoHead>Interpreter<DownloadIcon /></InfoHead>
                        <InfoValue>Fanuc30i_Mill.snci</InfoValue>
                    </SidePanel>
                    <SidePanel>
                        <InfoHead>Postprocessor<DownloadIcon /></InfoHead>
                        <InfoValue>Fanuc (30i)_Mill.sppx</InfoValue>
                    </SidePanel>
                </ExplorerColumn>
                <ProgramPanel>
                    <ProgramHead>
                        <Chevron />
                        <ProgramTitle>Program file</ProgramTitle>
                        <ProgramIcons>
                            <SyncIcon />
                            <SearchIcon />
                            <DiskIcon />
                            <span>···</span>
                        </ProgramIcons>
                    </ProgramHead>
                    <CodeRow>
                        <CodeArea>
                            {CODE.map((line, i) => <CodeRowLine key={i} line={line} />)}
                        </CodeArea>
                        <Track $top={24} $left={5}><Thumb $w={9} $h={90} /></Track>
                    </CodeRow>
                </ProgramPanel>
                <ModeColumn>
                    <ModeTab $active $h={88}>Edit</ModeTab>
                    <ModeTab $h={92}>Setup</ModeTab>
                    <ModeIcons $top={89}>
                        <ModeIcon $on $h={39}><NLines /></ModeIcon>
                        <ModeIcon $h={46}><IndentLines /></ModeIcon>
                        <ModeIcon $h={42}><CodeIcon /></ModeIcon>
                        <ModeIcon $h={42}><SwapPanes /></ModeIcon>
                        <ModeIcon $h={46}><ConvertIcon /></ModeIcon>
                    </ModeIcons>
                </ModeColumn>
                <EditorColumn>
                    <EditorHead>Editor</EditorHead>
                    <TreeWrap>
                        <TreeList>
                            <TreeRow>
                                <NameCell $pad={13} $gap={9}><MachineIcon />DECKEL MAHO DMU70</NameCell>
                                <div /><div /><div />
                                <CheckCell><ListDoc /></CheckCell>
                            </TreeRow>
                            <TreeRow>
                                <NameCell $pad={13} $gap={7}><Chevron s={12} /><BoltIcon />Part 1</NameCell>
                                <div>G54</div><div /><div />
                                <CheckCell><ListDoc /></CheckCell>
                            </TreeRow>
                            {OPS.map(([name, tool, desc], i) => (
                                <TreeRow key={name} $hl={i === 1}>
                                    <NameCell $pad={49} $gap={6} $hl={i === 1}><OpIcon />{name}</NameCell>
                                    <div>G54</div>
                                    <ToolCell>{tool}</ToolCell>
                                    <DescCell>{desc}</DescCell>
                                    <CheckCell><CheckBox on={i === 0} /></CheckCell>
                                </TreeRow>
                            ))}
                        </TreeList>
                        <Track $top={18} $left={4}><Thumb $w={8} $h={154} /></Track>
                    </TreeWrap>
                    <BlockPanel>
                        <BlockHead>
                            Block numbers
                            <BlockAction $ml="auto"><ResetIcon />Reset</BlockAction>
                            <BlockAction $ml="21px"><ApplyIcon />Apply</BlockAction>
                        </BlockHead>
                        <Segments>
                            <Segment $on>Add number</Segment>
                            <Segment>Remove number</Segment>
                            <Segment>Renumber</Segment>
                        </Segments>
                        <Form>
                            <FormRow $strong><div>Add number</div></FormRow>
                            <FormRow $nested>
                                <div>Register</div>
                                <FormValue>N</FormValue>
                                <FormMore>···</FormMore>
                            </FormRow>
                            <FormRow $nested>
                                <div>Start</div>
                                <FormValue $hover>10</FormValue>
                            </FormRow>
                            <FormRow $nested>
                                <div>Increment</div>
                                <FormValue>10</FormValue>
                            </FormRow>
                            <FormRow $nested>
                                <div>Renum empty lines</div>
                                <Toggle $nested />
                            </FormRow>
                            <FormRow><div>Restart</div><Toggle /></FormRow>
                            <FormRow><div>Indent</div><Toggle /></FormRow>
                            <FormRow><div>Skip</div><Toggle /></FormRow>
                        </Form>
                    </BlockPanel>
                </EditorColumn>
                <Viewport>
                    <Machine />
                    <ViewCube />
                    <ViewRow>
                        <Rail>
                            {RAIL.map((group, g) => (
                                <RailGroup key={g}>
                                    {group.map(([on, art], i) => (
                                        <RailButton key={i} $on={on}><Rail30>{art}</Rail30></RailButton>
                                    ))}
                                </RailGroup>
                            ))}
                        </Rail>
                    </ViewRow>
                    <StatusBar>
                        <StatusText>Machining simulation (0%) (0:00:05)</StatusText>
                        <Progress><ProgressKnob /></Progress>
                        <CoordSystem>
                            <CoordPlus>+</CoordPlus>
                            <svg width="26" height="20" viewBox="0 0 26 20" fill="none" stroke="#aaa" strokeWidth="1.4">
                                <path d="M13 2v10M13 12l-7 6M13 12l7 6" />
                            </svg>
                            Global CS
                        </CoordSystem>
                        <svg width="18" height="24" viewBox="0 0 18 24" fill="none" stroke="#555" strokeWidth="1.4">
                            <path d="M3 17V9a6 6 0 0 1 12 0v8l1 1H2zM7 20h4" />
                        </svg>
                        <Percent>13%</Percent>
                        <Battery><BatteryFill /></Battery>
                    </StatusBar>
                </Viewport>
            </Body>
        </Window>
        <ArrowLayer width="3133" height="1581">
            {ARROWS.map((points, i) => <Arrow key={i} points={points} />)}
        </ArrowLayer>
        {CALLOUTS.map(c => (
            <Callout key={c.text} $x={c.x} $y={c.y} $center={c.center}>
                {c.text.split("\n").map(t => <div key={t}>{t}</div>)}
            </Callout>
        ))}
    </Page>
);

export default App;
